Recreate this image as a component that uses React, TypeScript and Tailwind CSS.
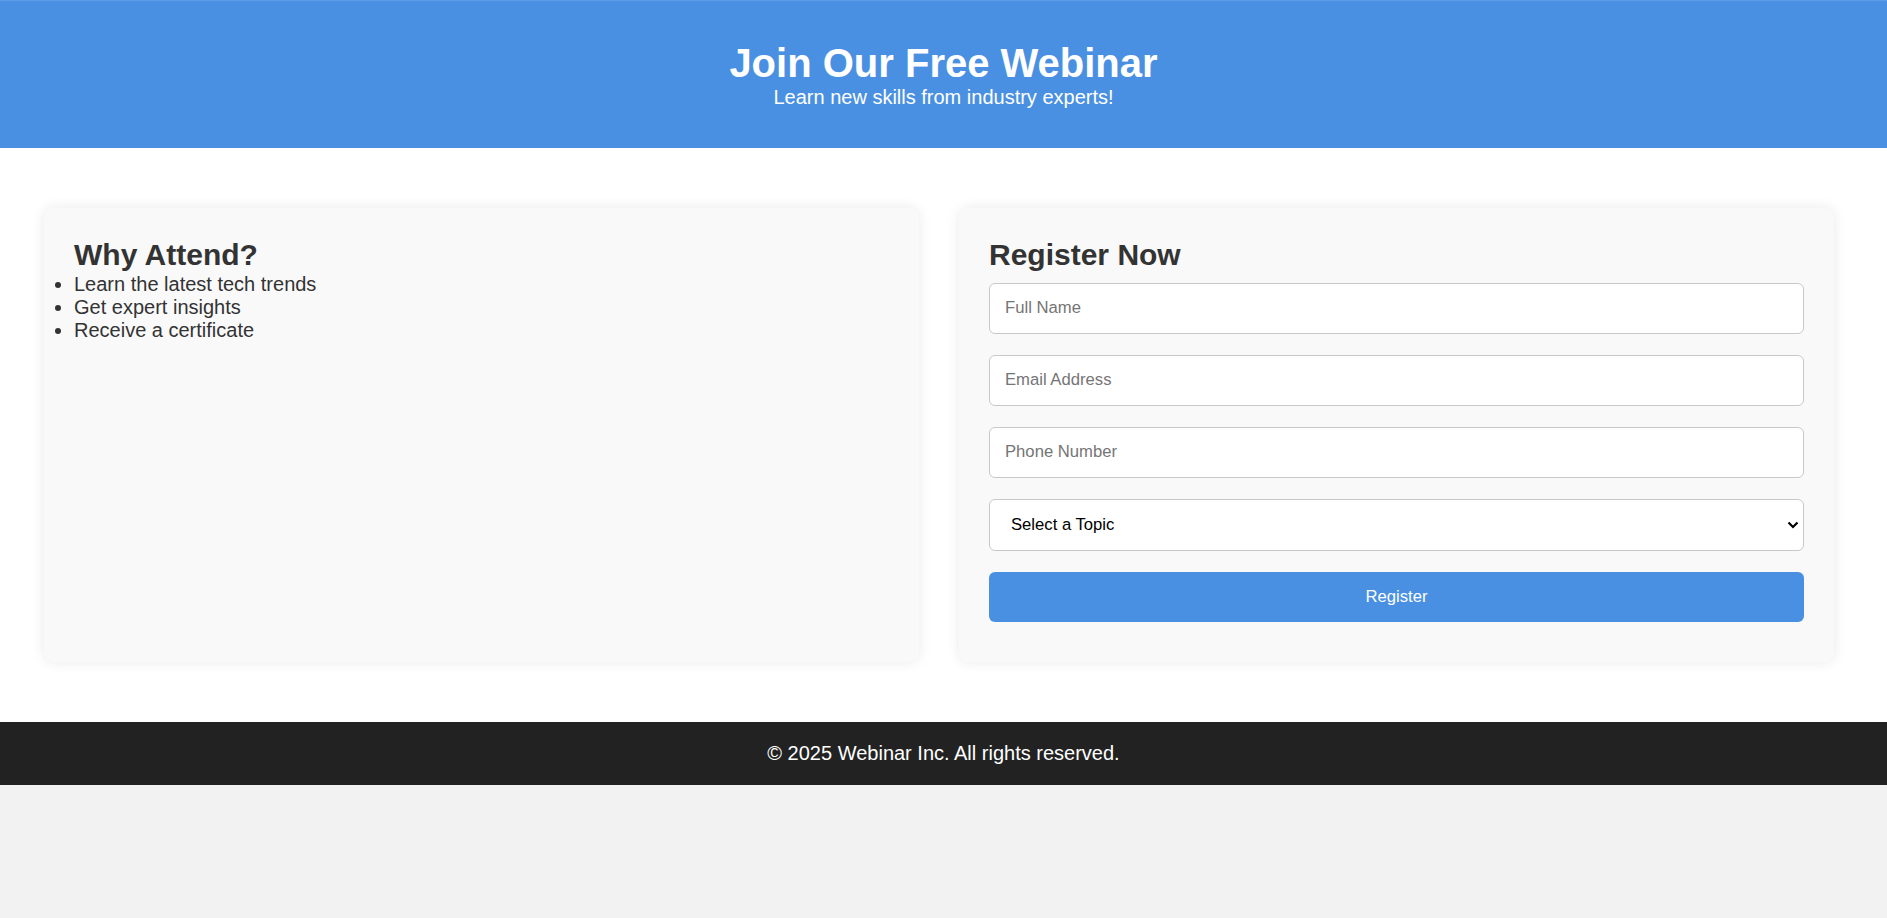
export default function App() {
  return (
    <div className="min-h-screen bg-[#f2f2f2] font-['Liberation_Sans',Arial,sans-serif] text-[#333]">
      <header className="border-t border-[#5d9ce6] bg-[#4a90e2] pt-[39px] pb-[39px] text-center text-white">
        <h1 className="text-[40px] font-bold leading-[46px]">Join Our Free Webinar</h1>
        <p className="text-[20px] leading-[23px]">Learn new skills from industry experts!</p>
      </header>

      <main className="grid grid-cols-2 gap-[40px] bg-white pt-[60px] pr-[53px] pb-[60px] pl-[44px]">
        <section className="rounded-[10px] bg-[#f9f9f9] p-[30px] shadow-[0_0_14px_rgba(0,0,0,0.09)]">
          <h2 className="text-[30px] font-bold leading-[34.5px]">Why Attend?</h2>
          <ul className="list-disc text-[20px] leading-[23px]">
            <li>Learn the latest tech trends</li>
            <li>Get expert insights</li>
            <li>Receive a certificate</li>
          </ul>
        </section>

        <section className="rounded-[10px] bg-[#f9f9f9] px-[30px] pt-[30px] pb-[40px] shadow-[0_0_14px_rgba(0,0,0,0.09)]">
          <h2 className="text-[30px] font-bold leading-[34.5px]">Register Now</h2>
          <form className="mt-[10px] flex flex-col gap-[21px] text-[16.67px]">
            <input
              type="text"
              placeholder="Full Name"
              className="h-[51px] w-full rounded-[6px] border border-[#c8c8c8] bg-white px-[15px] text-black placeholder:text-[#757575]"
            />
            <input
              type="email"
              placeholder="Email Address"
              className="h-[51px] w-full rounded-[6px] border border-[#c8c8c8] bg-white px-[15px] text-black placeholder:text-[#757575]"
            />
            <input
              type="tel"
              placeholder="Phone Number"
              className="h-[51px] w-full rounded-[6px] border border-[#c8c8c8] bg-white px-[15px] text-black placeholder:text-[#757575]"
            />
            <div className="relative">
              <select className="h-[52px] w-full appearance-none rounded-[6px] border border-[#c8c8c8] bg-white pl-[21px] text-black">
                <option>Select a Topic</option>
                <option>Web Development</option>
                <option>Data Science</option>
                <option>Cloud Computing</option>
              </select>
              <svg
                className="pointer-events-none absolute top-1/2 right-[5px] -translate-y-1/2"
                width="12"
                height="8"
                viewBox="0 0 12 8"
                fill="none"
              >
                <path d="M1.5 1.5l4.5 4.5 4.5-4.5" stroke="#000" strokeWidth="2.2" />
              </svg>
            </div>
            <button
              type="button"
              className="h-[50px] w-full rounded-[6px] bg-[#4a90e2] text-white"
            >
              Register
            </button>
          </form>
        </section>
      </main>

      <footer className="bg-[#222] py-[20px] text-center text-[20px] leading-[23px] text-white">
        © 2025 Webinar Inc. All rights reserved.
      </footer>
    </div>
  );
}
